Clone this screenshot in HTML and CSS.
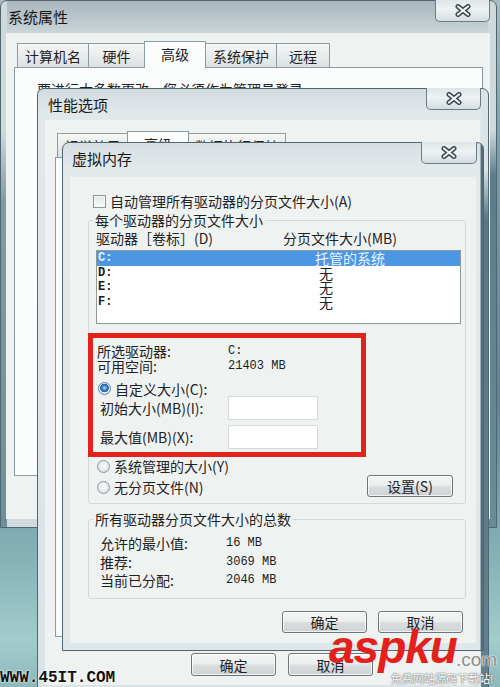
FILE: index.html
```html
<!DOCTYPE html>
<html lang="zh-CN">
<head>
<meta charset="utf-8">
<title>虚拟内存</title>
<link rel="stylesheet" href="styles.css">
</head>
<body>
<div class="desktop">

  <section class="win win1">
    <header class="titlebar tb1">
      <span class="title">系统属性</span>
      <span class="close close1"><svg width="16" height="13" viewBox="0 0 16 13"><path d="M3 2.5 L13 10.5 M13 2.5 L3 10.5" stroke="#3a474e" stroke-width="5" stroke-linecap="round" fill="none"/><path d="M3 2.5 L13 10.5 M13 2.5 L3 10.5" stroke="#f4f6f7" stroke-width="2.2" stroke-linecap="round" fill="none"/></svg></span>
    </header>
    <div class="client client1">
      <nav class="tabs tabs1">
        <span class="tab w72">计算机名</span>
        <span class="tab w57">硬件</span>
        <span class="tab sel w62">高级</span>
        <span class="tab w72">系统保护</span>
        <span class="tab w54">远程</span>
      </nav>
      <div class="panel panel1">
        <p class="note">要进行大多数更改，您必须作为管理员登录。</p>
      </div>
    </div>
  </section>

  <section class="win win2">
    <header class="titlebar tb2">
      <span class="title">性能选项</span>
      <span class="close close2"><svg width="16" height="13" viewBox="0 0 16 13"><path d="M3 2.5 L13 10.5 M13 2.5 L3 10.5" stroke="#3a474e" stroke-width="5" stroke-linecap="round" fill="none"/><path d="M3 2.5 L13 10.5 M13 2.5 L3 10.5" stroke="#f4f6f7" stroke-width="2.2" stroke-linecap="round" fill="none"/></svg></span>
    </header>
    <div class="client client2">
      <nav class="tabs tabs2">
        <span class="tab w71">视觉效果</span>
        <span class="tab sel w62">高级</span>
        <span class="tab w98">数据执行保护</span>
      </nav>
      <div class="panel panel2"></div>
      <div class="btnrow btnrow2">
        <span class="btn">确定</span>
        <span class="btn">取消</span>
      </div>
    </div>
  </section>

  <section class="win win3">
    <header class="titlebar tb3">
      <span class="title">虚拟内存</span>
      <span class="close close3"><svg width="16" height="13" viewBox="0 0 16 13"><path d="M3 2.5 L13 10.5 M13 2.5 L3 10.5" stroke="#3a474e" stroke-width="5" stroke-linecap="round" fill="none"/><path d="M3 2.5 L13 10.5 M13 2.5 L3 10.5" stroke="#f4f6f7" stroke-width="2.2" stroke-linecap="round" fill="none"/></svg></span>
    </header>
    <div class="client client3">
      <label class="check-row"><span class="checkbox"></span><span>自动管理所有驱动器的分页文件大小(A)</span></label>

      <fieldset class="group group1">
        <legend>每个驱动器的分页文件大小</legend>
        <div class="cols"><span>驱动器［卷标］(D)</span><span>分页文件大小(MB)</span></div>
        <div class="listbox">
          <div class="lrow selrow"><span class="drv">C:</span><span>托管的系统</span></div>
          <div class="lrow"><span class="drv">D:</span><span class="none">无</span></div>
          <div class="lrow"><span class="drv">E:</span><span class="none">无</span></div>
          <div class="lrow"><span class="drv">F:</span><span class="none">无</span></div>
        </div>

        <div class="redbox">
          <div class="kv"><span>所选驱动器:</span><span class="mono">C:</span></div>
          <div class="kv"><span>可用空间:</span><span class="mono">21403 MB</span></div>
          <div class="radio-row custom"><span class="radio on"></span><span>自定义大小(C):</span></div>
          <div class="field-row"><span class="flabel">初始大小(MB)(I):</span><span class="input"></span></div>
          <div class="field-row second"><span class="flabel">最大值(MB)(X):</span><span class="input"></span></div>
        </div>

        <div class="opts">
          <div class="radios">
            <div class="radio-row"><span class="radio"></span><span>系统管理的大小(Y)</span></div>
            <div class="radio-row gap"><span class="radio"></span><span>无分页文件(N)</span></div>
          </div>
          <span class="btn setbtn">设置(S)</span>
        </div>
      </fieldset>

      <fieldset class="group group2">
        <legend>所有驱动器分页文件大小的总数</legend>
        <div class="totals">
          <span class="tl">允许的最小值:</span><span class="mono">16 MB</span>
          <span class="tl">推荐:</span><span class="mono">3069 MB</span>
          <span class="tl">当前已分配:</span><span class="mono">2046 MB</span>
        </div>
      </fieldset>

      <div class="btnrow btnrow3">
        <span class="btn">确定</span>
        <span class="btn">取消</span>
      </div>
    </div>
  </section>

  <div class="wm-left">WWW.45IT.COM</div>
  <div class="wm-right">
    <span class="wm-asp">aspku</span><span class="wm-com">.com</span>
    <span class="wm-sub">免费网站源码下载站!</span>
  </div>
</div>
</body>
</html>
```

FILE: styles.css
```css
* { box-sizing: border-box; margin: 0; padding: 0; }

html, body { width: 500px; height: 687px; overflow: hidden; }

body {
  font-family: "Noto Sans CJK SC", "Noto Sans", sans-serif;
  font-size: 14px;
  color: #1f2223;
  background: linear-gradient(180deg, #a9bcc3 0, #7d9eaa 150px, #5f8594 400px, #86b3b8 560px, #a3cccc 640px, #8cb8bc 687px);
}

.desktop { position: relative; width: 500px; height: 687px; }

/* ---------- windows ---------- */
.win {
  position: absolute;
  display: flex;
  flex-direction: column;
  border: 1px solid #52666f;
  border-radius: 7px 7px 0 0;
}

.win1 {
  z-index: 1;
  left: 0; top: 0; width: 497px; height: 528px;
  background:
    linear-gradient(180deg, #cfd9dc 0, #cfd9dc 130px, #5c7c8a 175px, #6a8b98 100%) right top / 8px 100% no-repeat,
    linear-gradient(180deg, #cfd9dc 0, #cfd9dc 130px, #7f9ba6 200px, #6f8f9b 100%) left top / 6px 100% no-repeat,
    linear-gradient(180deg, #a8b6bc 0, #bcc7cc 18px, #cdd7db 34px, #d2dbde 100%);
}

.win2 {
  z-index: 2;
  left: 37px; top: 88px; width: 452px; height: 606px;
  background:
    linear-gradient(180deg, #dbe3e6 0, #dbe3e6 80px, #56798a 130px, #5f8190 100%) right top / 7px 100% no-repeat,
    linear-gradient(180deg, #d2dce0 0, #e1e8ea 24px, #dae3e6 100%);
}

.win3 {
  z-index: 3;
  left: 62px; top: 142px; width: 422px; height: 509px;
  background:
    linear-gradient(90deg, transparent 0, transparent 4px, #57727e 5px, #4e6a77 7px) right top / 7px 100% no-repeat,
    linear-gradient(180deg, #d6dfe3 0, #e4eaec 26px, #e0e7e9 100%);
}

.titlebar {
  display: flex;
  justify-content: space-between;
  align-items: flex-start;
  flex: none;
}
.title { font-size: 15px; line-height: 18px; color: #151818; }

.tb1 { height: 32px; }
.tb1 .title { padding: 7px 0 0 7px; }
.tb2 { height: 31px; }
.tb2 .title { padding: 7px 0 0 10px; }
.tb3 { height: 34px; }
.tb3 .title { padding: 7px 0 0 9px; }

.close {
  display: flex;
  align-items: center;
  justify-content: center;
  width: 55px;
  height: 22px;
  margin-top: -1px;
  border: 1px solid #6a7c84;
  border-top: none;
  border-radius: 0 0 5px 5px;
  background: linear-gradient(180deg, #dfe6e9 0, #eef2f3 45%, #d4dde1 100%);
}
.close1 { margin-right: 6px; }
.close2 { margin-right: 7px; }
.close3 { width: 56px; height: 22px; margin-right: 6px; }

.client {
  flex: 1;
  display: flex;
  flex-direction: column;
  background: #eef2f1;
}
.client1 { margin: 0 6px 8px 5px; padding-left: 8px; }
.client2 { margin: 0 8px 8px 7px; padding-left: 10px; }
.client3 { margin: 0 7px 7px 7px; padding: 15px 0 0 18px; background: #eef3f2; }

/* ---------- tabs ---------- */
.tabs { display: flex; align-items: flex-end; height: 27px; flex: none; }
.tabs1 { margin: 7px 0 0 3px; }
.tabs2 { margin: 10px 0 0 2px; }

.tab {
  display: flex;
  align-items: center;
  justify-content: center;
  height: 24px;
  margin-left: -1px;
  border: 1px solid #8b9ca4;
  border-bottom: none;
  background: linear-gradient(180deg, #f6f7f7 0, #e9ecec 50%, #dde1e2 100%);
  line-height: 18px;
}
.tab:first-child { margin-left: 0; }
.tab.sel {
  position: relative;
  z-index: 1;
  height: 27px;
  margin-bottom: -1px;
  background: #fbfcfc;
  padding-bottom: 3px;
}
.w54 { width: 54px; } .w57 { width: 57px; } .w62 { width: 62px; }
.w71 { width: 71px; } .w72 { width: 72px; } .w98 { width: 98px; }

.panel { background: #fbfcfc; border: 1px solid #8b9ca4; flex: none; }
.panel1 { width: 469px; height: 409px; }
.panel2 { width: 417px; height: 480px; }

.note { padding: 12px 0 0 22px; line-height: 18px; white-space: nowrap; }

/* ---------- buttons ---------- */
.btn {
  display: flex;
  align-items: center;
  justify-content: center;
  width: 85px;
  height: 23px;
  border: 1px solid #6f7679;
  border-radius: 3px;
  background: linear-gradient(180deg, #f4f5f5 0, #ebeeee 48%, #dadedf 52%, #cfd3d4 100%);
  box-shadow: inset 0 0 0 1px rgba(255,255,255,0.7);
  line-height: 18px;
}
.btnrow { display: flex; flex: none; }
.btnrow2 { margin: 16px 0 0 136px; gap: 12px; }
.btnrow3 { margin-top: 12px; width: 375px; justify-content: flex-end; gap: 11px; }
.btnrow3 .btn { height: 22px; }

/* ---------- virtual memory contents ---------- */
.check-row {
  display: flex;
  align-items: center;
  gap: 4px;
  height: 18px;
  margin-left: 5px;
  line-height: 18px;
}
.checkbox {
  width: 13px;
  height: 13px;
  border: 1px solid #8c989e;
  background: linear-gradient(180deg, #e3e6e7, #fbfbfb);
  box-shadow: inset 0 0 0 1px #f4f6f6;
}

.group {
  width: 378px;
  border: 1px solid #d0dadd;
  border-radius: 3px;
  padding: 0 4px 8px 7px;
  min-inline-size: 0;
}
.group legend { padding: 0 2px; margin-left: -3px; line-height: 18px; }
.group1 { margin-top: 1px; }
.group2 { margin-top: 6px; padding-bottom: 8px; }

.cols { display: grid; grid-template-columns: 187px auto; line-height: 18px; }

.listbox {
  margin-top: 3px;
  height: 74px;
  border: 1px solid #8e979c;
  background: #ffffff;
}
.lrow {
  display: grid;
  grid-template-columns: 218px auto;
  height: 14.6px;
  line-height: 14.6px;
}
.drv { font-family: "Liberation Mono", monospace; font-weight: bold; font-size: 12px; padding-left: 1px; color: #1a1a1a; }
.none { padding-left: 4px; }
.selrow { background: #4b97e4; color: #e9f4ff; }
.selrow .drv { color: #e9f4ff; }

.redbox {
  margin: 9px 0 0 -8px;
  width: 278px;
  border: 5px solid #e2231c;
  padding: 6px 0 3px 4px;
}
.kv { display: grid; grid-template-columns: 131px auto; line-height: 15px; height: 15px; }
.mono { font-family: "Liberation Mono", monospace; font-size: 12px; color: #1c1c1c; }

.radio-row { display: flex; align-items: center; gap: 4px; height: 16px; line-height: 16px; padding-left: 1px; }
.radio-row.custom { margin-top: 7px; height: 15px; }
.radio-row.gap { margin-top: 5px; }
.radio {
  width: 13px;
  height: 13px;
  border-radius: 50%;
  border: 1px solid #8d999f;
  background: radial-gradient(circle at 50% 45%, #ffffff 0, #eef0f1 40%, #c9d0d3 100%);
}
.radio.on {
  border-color: #5b87ad;
  background: radial-gradient(circle at 50% 45%, #a8dcfa 0, #3d86cf 2.5px, #1f5c9e 4px, #e9eef0 4.6px, #d3dadd 100%);
}

.field-row { display: grid; grid-template-columns: 131px 90px; align-items: center; height: 24px; }
.field-row.second { margin-top: 5px; }
.flabel { padding-left: 3px; line-height: 18px; }
.input { height: 24px; background: #ffffff; border: 1px solid #d5dbdc; }

.opts { display: flex; justify-content: space-between; align-items: flex-end; margin-top: 1px; }
.setbtn { width: 86px; height: 22px; margin: 0 8px -2px 0; }

.totals {
  display: grid;
  grid-template-columns: 130px auto;
  grid-auto-rows: 18.5px;
  align-items: center;
  padding-top: 6px;
}
.tl { padding-left: 4px; line-height: 18px; }

/* ---------- watermarks ---------- */
.wm-left {
  position: absolute;
  z-index: 5;
  left: 0;
  bottom: 1px;
  font-family: "Liberation Mono", monospace;
  font-weight: bold;
  font-size: 16px;
  line-height: 16px;
  color: #111111;
  text-shadow: 0 0 2px #ffffff, 0 0 2px #ffffff;
}
.wm-right {
  position: absolute;
  z-index: 5;
  left: 329px;
  top: 627px;
  width: 171px;
  height: 60px;
}
.wm-asp {
  position: absolute;
  left: 0;
  top: 0;
  font-family: "Liberation Sans", sans-serif;
  font-weight: bold;
  font-style: italic;
  font-size: 46px;
  line-height: 40px;
  letter-spacing: -1px;
  color: #e2211c;
}
.wm-com {
  position: absolute;
  left: 127px;
  top: 23px;
  font-family: "Liberation Sans", sans-serif;
  font-size: 19px;
  line-height: 20px;
  color: #8d8d8d;
  text-shadow: 0 0 2px #ffffff, 0 0 1px #ffffff;
}
.wm-sub {
  position: absolute;
  left: 62px;
  top: 44px;
  font-size: 11px;
  line-height: 14px;
  color: #ffffff;
  white-space: nowrap;
  text-shadow: 0 0 2px #6b6b6b, 0 0 1px #555555;
}
```
